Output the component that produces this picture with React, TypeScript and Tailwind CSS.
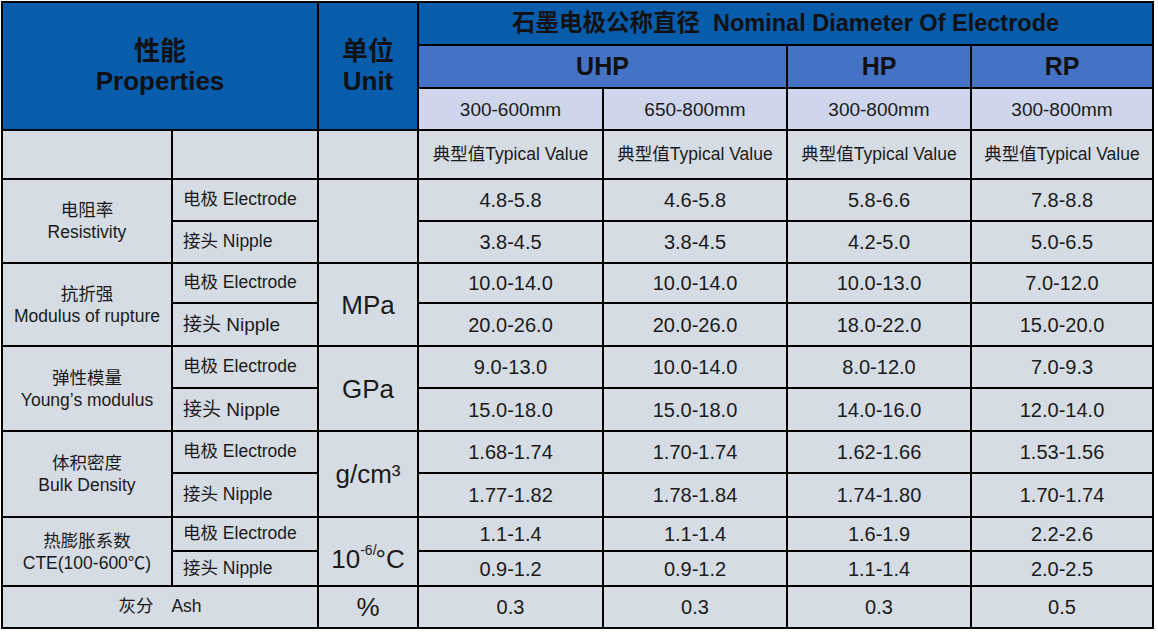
import React from "react";

// Graphite electrode property table — UHP / HP / RP grades
type Row = { label: string; values: string[]; h: string; big?: boolean };
type Group = { zh: string; en: string; unit: React.ReactNode; rows: Row[] };

const GROUPS: Group[] = [
  {
    zh: "电阻率",
    en: "Resistivity",
    unit: null,
    rows: [
      { label: "Electrode", values: ["4.8-5.8", "4.6-5.8", "5.8-6.6", "7.8-8.8"], h: "h-[42px]" },
      { label: "Nipple", values: ["3.8-4.5", "3.8-4.5", "4.2-5.0", "5.0-6.5"], h: "h-[42px]" },
    ],
  },
  {
    zh: "抗折强",
    en: "Modulus of rupture",
    unit: "MPa",
    rows: [
      { label: "Electrode", values: ["10.0-14.0", "10.0-14.0", "10.0-13.0", "7.0-12.0"], h: "h-[40px]" },
      { label: "Nipple", values: ["20.0-26.0", "20.0-26.0", "18.0-22.0", "15.0-20.0"], h: "h-[43px]", big: true },
    ],
  },
  {
    zh: "弹性模量",
    en: "Young’s modulus",
    unit: "GPa",
    rows: [
      { label: "Electrode", values: ["9.0-13.0", "10.0-14.0", "8.0-12.0", "7.0-9.3"], h: "h-[42px]" },
      { label: "Nipple", values: ["15.0-18.0", "15.0-18.0", "14.0-16.0", "12.0-14.0"], h: "h-[43px]", big: true },
    ],
  },
  {
    zh: "体积密度",
    en: "Bulk Density",
    unit: "g/cm³",
    rows: [
      { label: "Electrode", values: ["1.68-1.74", "1.70-1.74", "1.62-1.66", "1.53-1.56"], h: "h-[42px]" },
      { label: "Nipple", values: ["1.77-1.82", "1.78-1.84", "1.74-1.80", "1.70-1.74"], h: "h-[44px]" },
    ],
  },
  {
    zh: "热膨胀系数",
    en: "CTE(100-600℃)",
    unit: (
      <span className="inline-block pt-[14px]">
        10<sup className="text-[14px] align-[6px]">-6/</sup>
        <span className="-ml-[1px]">°C</span>
      </span>
    ),
    rows: [
      { label: "Electrode", values: ["1.1-1.4", "1.1-1.4", "1.6-1.9", "2.2-2.6"], h: "h-[34px]" },
      { label: "Nipple", values: ["0.9-1.2", "0.9-1.2", "1.1-1.4", "2.0-2.5"], h: "h-[35px]" },
    ],
  },
];

const RANGES = ["300-600mm", "650-800mm", "300-800mm", "300-800mm"];
const ASH = ["0.3", "0.3", "0.3", "0.5"];

const cell = "border-2 border-black p-0 text-center align-middle";

export default function App() {
  return (
    <div className="min-h-screen bg-white pt-px pl-px font-['Liberation_Sans','Noto_Sans_CJK_SC',sans-serif] text-[#1a1a1a]">
      <table className="w-[1153px] table-fixed border-collapse bg-[#d6dce4]">
        <colgroup>
          <col className="w-[170px]" />
          <col className="w-[146px]" />
          <col className="w-[100px]" />
          <col className="w-[185px]" />
          <col className="w-[184px]" />
          <col className="w-[184px]" />
          <col className="w-[182px]" />
        </colgroup>
        <tbody>
          {/* ── Header block ── */}
          <tr className="h-[43px]">
            <td colSpan={2} rowSpan={3} className={`${cell} bg-[#085cac] text-[26px] font-bold leading-[30px] text-[#111]`}>
              性能
              <br />
              Properties
            </td>
            <td rowSpan={3} className={`${cell} bg-[#085cac] text-[26px] font-bold leading-[30px] text-[#111]`}>
              单位
              <br />
              Unit
            </td>
            <td colSpan={4} className={`${cell} bg-[#085cac] text-[23.5px] font-bold leading-none text-[#111] whitespace-pre`}>
              {"石墨电极公称直径  Nominal Diameter Of Electrode"}
            </td>
          </tr>
          <tr className="h-[43px]">
            <td colSpan={2} className={`${cell} bg-[#4472c4] text-[25px] font-bold leading-none text-[#111]`}>UHP</td>
            <td className={`${cell} bg-[#4472c4] text-[25px] font-bold leading-none text-[#111]`}>HP</td>
            <td className={`${cell} bg-[#4472c4] text-[25px] font-bold leading-none text-[#111]`}>RP</td>
          </tr>
          <tr className="h-[42px]">
            {RANGES.map((r, i) => (
              <td key={i} className={`${cell} bg-[#cfd5ea] text-[19px] leading-none`}>
                {r}
              </td>
            ))}
          </tr>

          {/* ── Typical value row ── */}
          <tr className="h-[49px]">
            <td className={cell} />
            <td className={cell} />
            <td className={cell} />
            {RANGES.map((_, i) => (
              <td key={i} className={`${cell} text-[17.5px] leading-none`}>
                典型值Typical Value
              </td>
            ))}
          </tr>

          {/* ── Property groups ── */}
          {GROUPS.map((g) =>
            g.rows.map((row, ri) => (
              <tr key={g.en + row.label} className={row.h}>
                {ri === 0 && (
                  <td rowSpan={2} className={`${cell} text-[17.5px] leading-[22px]`}>
                    {g.zh}
                    <br />
                    {g.en}
                  </td>
                )}
                <td className={`${cell} pl-[10px] text-left leading-none ${row.big ? "text-[19px]" : "text-[17.5px]"}`}>
                  {row.label === "Electrode" ? "电极 Electrode" : "接头 Nipple"}
                </td>
                {ri === 0 && (
                  <td rowSpan={2} className={`${cell} text-[26px] leading-none`}>
                    {g.unit}
                  </td>
                )}
                {row.values.map((v, vi) => (
                  <td key={vi} className={`${cell} text-[20px] leading-none`}>
                    {v}
                  </td>
                ))}
              </tr>
            ))
          )}

          {/* ── Ash ── */}
          <tr className="h-[42px]">
            <td colSpan={2} className={`${cell} text-[17.5px] leading-none`}>
              灰分<span className="ml-[18px]">Ash</span>
            </td>
            <td className={`${cell} text-[26px] leading-none`}>%</td>
            {ASH.map((v, i) => (
              <td key={i} className={`${cell} text-[20px] leading-none`}>
                {v}
              </td>
            ))}
          </tr>
        </tbody>
      </table>
    </div>
  );
}
